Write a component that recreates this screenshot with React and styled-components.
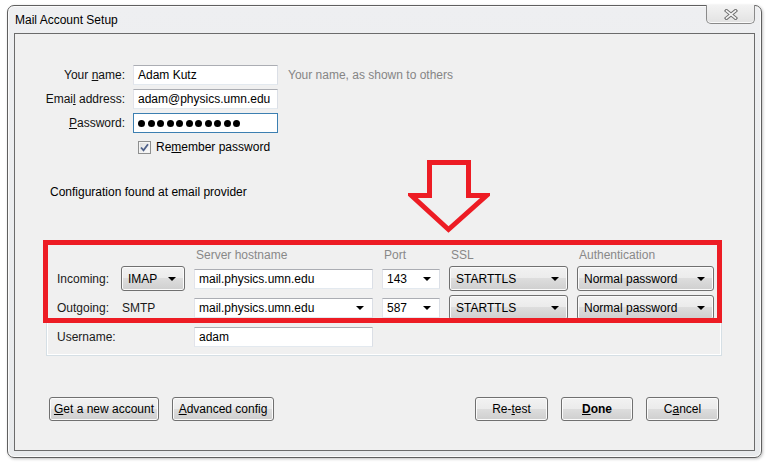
import React from 'react';
import styled, { createGlobalStyle } from 'styled-components';

const Global = createGlobalStyle`
  html, body { margin: 0; padding: 0; background: #ffffff; }
  body {
    font-family: "Liberation Sans", Arial, sans-serif;
    font-size: 12px;
    color: #000;
  }
`;

const Desktop = styled.div`
  width: 766px;
  height: 462px;
  box-sizing: border-box;
  padding: 5px 0 0 7px;
  overflow: hidden;
`;

const Window = styled.div`
  width: 755px;
  height: 453px;
  box-sizing: border-box;
  border: 1px solid #5f5f5f;
  border-radius: 7px;
  background: linear-gradient(#eeeff1, #e8eaec);
  box-shadow: inset 0 0 0 1px #fbfbfb, 1px 1px 3px rgba(0, 0, 0, 0.25);
  padding: 0 6px 6px 6px;
  display: flex;
  flex-direction: column;
`;

const TitleBar = styled.div`
  height: 27px;
  flex: none;
  display: flex;
  justify-content: space-between;
  align-items: flex-start;
`;

const Title = styled.span`
  margin-top: 7px;
  padding-left: 1px;
  line-height: 14px;
`;

const CloseBtn = styled.div`
  margin-top: -1px;
  width: 49px;
  height: 19px;
  box-sizing: border-box;
  border: 1px solid #8a8a8a;
  border-top: none;
  border-radius: 0 0 5px 5px;
  background: linear-gradient(#f3f3f3, #e2e2e2);
  box-shadow: inset 0 -1px 0 #fafafa;
  display: flex;
  align-items: center;
  justify-content: center;
`;

const Client = styled.div`
  flex: 1;
  position: relative;
  border: 1px solid #6b6b6b;
  background: #f0f0f0;
  display: flex;
  flex-direction: column;
`;

const TopGrid = styled.div`
  margin-top: 31px;
  display: grid;
  grid-template-columns: 118px 145px auto;
  grid-auto-rows: 20px;
  row-gap: 4px;
  align-items: center;
`;

const Label = styled.div`
  text-align: right;
  padding-right: 8px;
  color: #111;
`;

const TextBox = styled.div`
  height: 20px;
  box-sizing: border-box;
  border: 1px solid;
  border-color: ${p => (p.focus ? '#3c7fb1' : '#abadb3 #dbdfe6 #e3e9ef #e2e3ea')};
  background: #fff;
  padding: 0 8px 0 4px;
  display: flex;
  align-items: center;
  justify-content: space-between;
  gap: 4px;
  white-space: nowrap;
  overflow: hidden;
`;

const Hint = styled.div`
  padding-left: 10px;
  color: #858585;
`;

const CheckRow = styled.label`
  grid-column: 2 / 4;
  padding-left: 5px;
  display: flex;
  align-items: center;
  gap: 5px;
`;

const CheckBox = styled.span`
  width: 13px;
  height: 13px;
  box-sizing: border-box;
  border: 1px solid #8e8f8f;
  background: linear-gradient(135deg, #dcdcdc, #ffffff);
  box-shadow: inset 0 0 0 1px #f4f4f4;
  display: flex;
  align-items: center;
  justify-content: center;
`;

const Dots = styled.div`
  display: flex;
  gap: 2.5px;
`;

const Dot = styled.span`
  width: 7px;
  height: 7px;
  border-radius: 50%;
  background: #000;
`;

const ConfigText = styled.div`
  margin: 27px 0 0 35px;
  line-height: 16px;
`;

const Panel = styled.div`
  margin: 42px 0 0 31px;
  width: 676px;
  box-sizing: border-box;
  border: 1px solid #d5dfe5;
  box-shadow: inset 0 0 0 1px #ffffff;
  padding: 4px 7px 6px 9px;
  display: grid;
  grid-template-columns: 56px 64px 179px 58px 119px 137px;
  grid-template-rows: 15px 25px 25px 25px;
  column-gap: 9px;
  row-gap: 4px;
  align-items: center;
`;

const Head = styled.div`
  grid-column: ${p => p.col};
  color: #888;
  padding-left: ${p => p.pad || 2}px;
`;

const RowLabel = styled.div`
  grid-column: ${p => p.span || 'auto'};
  padding-left: 1px;
  color: #1a1a1a;
`;

const Select = styled.div`
  height: 25px;
  box-sizing: border-box;
  border: 1px solid #707070;
  border-radius: 3px;
  background: linear-gradient(#f2f2f2 0%, #ebebeb 50%, #dddddd 50%, #cfcfcf 100%);
  box-shadow: inset 0 0 0 1px #fbfbfb;
  padding: 0 8px 0 6px;
  display: flex;
  align-items: center;
  justify-content: space-between;
  white-space: nowrap;
`;

const Caret = styled.span`
  width: 0;
  height: 0;
  border-left: 4px solid transparent;
  border-right: 4px solid transparent;
  border-top: 4px solid #000;
  flex: none;
`;

const ButtonRow = styled.div`
  margin-top: 41px;
  padding: 0 35px 0 34px;
  display: flex;
  justify-content: space-between;
`;

const Group = styled.div`
  display: flex;
  gap: 13px;
`;

const Button = styled.div`
  width: ${p => p.w}px;
  height: 24px;
  box-sizing: border-box;
  border: 1px solid #707070;
  border-radius: 3px;
  background: linear-gradient(#f2f2f2 0%, #ebebeb 50%, #dddddd 50%, #cfcfcf 100%);
  box-shadow: inset 0 0 0 1px #fbfbfb;
  display: flex;
  align-items: center;
  justify-content: center;
  font-weight: ${p => (p.bold ? 700 : 400)};
  white-space: nowrap;
`;

const RedBox = styled.div`
  position: absolute;
  left: 28px;
  top: 206px;
  width: 679px;
  height: 83px;
  box-sizing: border-box;
  border: 5px solid #ed1c24;
  pointer-events: none;
`;

const ArrowSvg = styled.svg`
  position: absolute;
  left: 393px;
  top: 126px;
  pointer-events: none;
`;

export default function App() {
  return (
    <>
      <Global />
      <Desktop>
        <Window>
          <TitleBar>
            <Title>Mail Account Setup</Title>
            <CloseBtn>
              <svg width="14" height="11" viewBox="0 0 14 11">
                <path d="M2.5 1.8 L11.5 9.2 M11.5 1.8 L2.5 9.2" stroke="#707070" strokeWidth="3.6" strokeLinecap="square" fill="none" />
                <path d="M2.5 1.8 L11.5 9.2 M11.5 1.8 L2.5 9.2" stroke="#f5f5f5" strokeWidth="1.6" strokeLinecap="square" fill="none" />
              </svg>
            </CloseBtn>
          </TitleBar>
          <Client>
            <TopGrid>
              <Label>Your <u>n</u>ame:</Label>
              <TextBox>Adam Kutz</TextBox>
              <Hint>Your name, as shown to others</Hint>

              <Label>Emai<u>l</u> address:</Label>
              <TextBox>adam@physics.umn.edu</TextBox>
              <div />

              <Label><u>P</u>assword:</Label>
              <TextBox focus>
                <Dots>
                  {Array.from({ length: 11 }).map((_, i) => (
                    <Dot key={i} />
                  ))}
                </Dots>
              </TextBox>
              <div />

              <div />
              <CheckRow>
                <CheckBox>
                  <svg width="9" height="9" viewBox="0 0 9 9">
                    <path d="M1 4.5 L3.5 7.3 L8 1.2" stroke="#4e6089" strokeWidth="1.8" fill="none" />
                  </svg>
                </CheckBox>
                <span>Re<u>m</u>ember password</span>
              </CheckRow>
            </TopGrid>

            <ConfigText>Configuration found at email provider</ConfigText>

            <Panel>
              <div />
              <div />
              <Head col={3}>Server hostname</Head>
              <Head col={4}>Port</Head>
              <Head col={5}>SSL</Head>
              <Head col={6}>Authentication</Head>

              <RowLabel>Incoming:</RowLabel>
              <Select>IMAP <Caret /></Select>
              <TextBox>mail.physics.umn.edu</TextBox>
              <TextBox>143 <Caret /></TextBox>
              <Select>STARTTLS <Caret /></Select>
              <Select>Normal password <Caret /></Select>

              <RowLabel>Outgoing:</RowLabel>
              <RowLabel>SMTP</RowLabel>
              <TextBox>mail.physics.umn.edu <Caret /></TextBox>
              <TextBox>587 <Caret /></TextBox>
              <Select>STARTTLS <Caret /></Select>
              <Select>Normal password <Caret /></Select>

              <RowLabel span="1 / 3">Username:</RowLabel>
              <TextBox>adam</TextBox>
            </Panel>

            <ButtonRow>
              <Group>
                <Button w={110}><u>G</u>et a new account</Button>
                <Button w={102}><u>A</u>dvanced config</Button>
              </Group>
              <Group>
                <Button w={73}>Re-<u>t</u>est</Button>
                <Button w={72} bold><u>D</u>one</Button>
                <Button w={73}>C<u>a</u>ncel</Button>
              </Group>
            </ButtonRow>

            <RedBox />
            <ArrowSvg width="82" height="74" viewBox="0 0 82 74">
              <path
                d="M21.5 2.5 H60.5 V35.5 H78.5 L40.5 69.5 L3.5 35.5 H21.5 Z"
                fill="none"
                stroke="#ed1c24"
                strokeWidth="5"
                strokeLinejoin="miter"
              />
            </ArrowSvg>
          </Client>
        </Window>
      </Desktop>
    </>
  );
}
